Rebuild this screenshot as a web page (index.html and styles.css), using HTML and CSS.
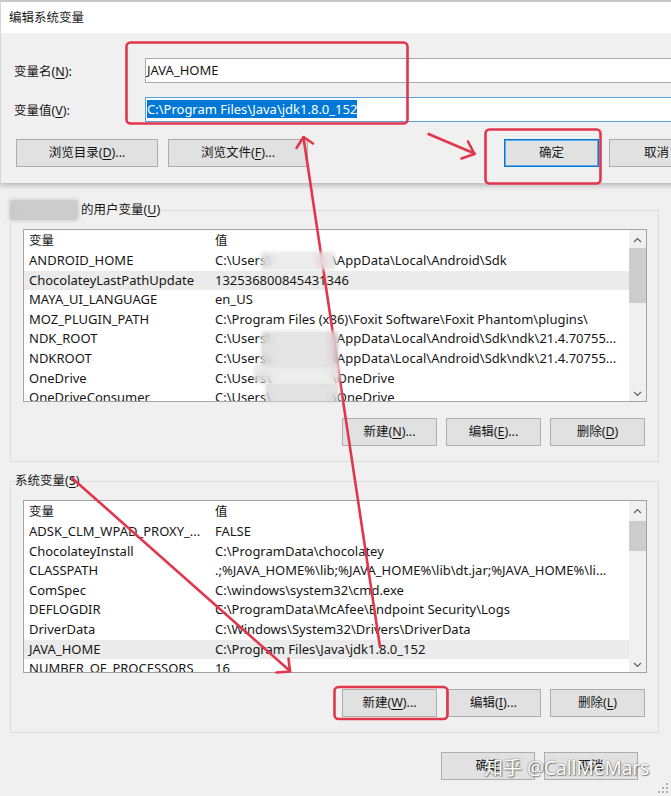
FILE: index.html
```html
<!DOCTYPE html>
<html lang="zh-CN">
<head>
<meta charset="utf-8">
<title>编辑系统变量</title>
<link rel="stylesheet" href="styles.css">
</head>
<body>
<div class="screen">

  <section class="edit-dlg">
    <div class="edit-title">编辑系统变量</div>
    <div class="edit-body">
      <div class="field">
        <span class="field-label">变量名(<u>N</u>):</span>
        <div class="text-input">JAVA_HOME</div>
      </div>
      <div class="field">
        <span class="field-label">变量值(<u>V</u>):</span>
        <div class="text-input focus"><span class="sel">C:\Program Files\Java\jdk1.8.0_152</span></div>
      </div>
      <div class="edit-btns">
        <button class="btn btn-browse-dir">浏览目录(<u>D</u>)...</button>
        <button class="btn btn-browse-file">浏览文件(<u>F</u>)...</button>
        <button class="btn btn-default btn-ok">确定</button>
        <button class="btn btn-cancel">取消</button>
      </div>
    </div>
  </section>

  <div class="env">
    <fieldset class="group">
      <legend class="group-label"><span class="name-slot"></span>的用户变量(<u>U</u>)</legend>
      <div class="lv">
        <div class="lv-main">
          <div class="lv-head"><span>变量</span><span>值</span></div>
          <div class="lv-row"><span>ANDROID_HOME</span><span>C:\Users\<i class="gap"></i>\AppData\Local\Android\Sdk</span></div>
          <div class="lv-row hl"><span>ChocolateyLastPathUpdate</span><span>132536800845431346</span></div>
          <div class="lv-row"><span>MAYA_UI_LANGUAGE</span><span>en_US</span></div>
          <div class="lv-row"><span>MOZ_PLUGIN_PATH</span><span>C:\Program Files (x86)\Foxit Software\Foxit Phantom\plugins\</span></div>
          <div class="lv-row"><span>NDK_ROOT</span><span>C:\Users\<i class="gap"></i>\AppData\Local\Android\Sdk\ndk\21.4.70755...</span></div>
          <div class="lv-row"><span>NDKROOT</span><span>C:\Users\<i class="gap"></i>\AppData\Local\Android\Sdk\ndk\21.4.70755...</span></div>
          <div class="lv-row"><span>OneDrive</span><span>C:\Users\<i class="gap"></i>\OneDrive</span></div>
          <div class="lv-row"><span>OneDriveConsumer</span><span>C:\Users\<i class="gap"></i>\OneDrive</span></div>
        </div>
        <div class="lv-scroll">
          <div class="sb-arrow"><svg width="9" height="6" viewBox="0 0 9 6"><polyline points="1,5 4.5,1.5 8,5" fill="none" stroke="#606060" stroke-width="1.2"/></svg></div>
          <div class="sb-track"><div class="thumb thumb-user"></div></div>
          <div class="sb-arrow"><svg width="9" height="6" viewBox="0 0 9 6"><polyline points="1,1 4.5,4.5 8,1" fill="none" stroke="#606060" stroke-width="1.2"/></svg></div>
        </div>
      </div>
      <div class="grp-btns">
        <button class="btn">新建(<u>N</u>)...</button>
        <button class="btn">编辑(<u>E</u>)...</button>
        <button class="btn">删除(<u>D</u>)</button>
      </div>
    </fieldset>

    <fieldset class="group group-sys">
      <legend class="group-label">系统变量(<u>S</u>)</legend>
      <div class="lv">
        <div class="lv-main">
          <div class="lv-head"><span>变量</span><span>值</span></div>
          <div class="lv-row"><span>ADSK_CLM_WPAD_PROXY_...</span><span>FALSE</span></div>
          <div class="lv-row"><span>ChocolateyInstall</span><span>C:\ProgramData\chocolatey</span></div>
          <div class="lv-row"><span>CLASSPATH</span><span>.;%JAVA_HOME%\lib;%JAVA_HOME%\lib\dt.jar;%JAVA_HOME%\li...</span></div>
          <div class="lv-row"><span>ComSpec</span><span>C:\windows\system32\cmd.exe</span></div>
          <div class="lv-row"><span>DEFLOGDIR</span><span>C:\ProgramData\McAfee\Endpoint Security\Logs</span></div>
          <div class="lv-row"><span>DriverData</span><span>C:\Windows\System32\Drivers\DriverData</span></div>
          <div class="lv-row hl"><span>JAVA_HOME</span><span>C:\Program Files\Java\jdk1.8.0_152</span></div>
          <div class="lv-row"><span>NUMBER_OF_PROCESSORS</span><span>16</span></div>
        </div>
        <div class="lv-scroll">
          <div class="sb-arrow"><svg width="9" height="6" viewBox="0 0 9 6"><polyline points="1,5 4.5,1.5 8,5" fill="none" stroke="#606060" stroke-width="1.2"/></svg></div>
          <div class="sb-track"><div class="thumb thumb-sys"></div></div>
          <div class="sb-arrow"><svg width="9" height="6" viewBox="0 0 9 6"><polyline points="1,1 4.5,4.5 8,1" fill="none" stroke="#606060" stroke-width="1.2"/></svg></div>
        </div>
      </div>
      <div class="grp-btns">
        <button class="btn">新建(<u>W</u>)...</button>
        <button class="btn">编辑(<u>I</u>)...</button>
        <button class="btn">删除(<u>L</u>)</button>
      </div>
    </fieldset>

    <div class="footer">
      <button class="btn">确定</button>
      <button class="btn">取消</button>
    </div>
  </div>

  <svg class="annot" width="671" height="796" viewBox="0 0 671 796">
    <g fill="none" stroke="#e2364c" stroke-width="2.6" stroke-linecap="round" stroke-linejoin="round">
      <rect x="126.5" y="42.5" width="281" height="81" rx="4"/>
      <rect x="485.5" y="129.5" width="115" height="54" rx="4"/>
      <rect x="334.5" y="687" width="113" height="32" rx="4"/>
      <line x1="380" y1="647" x2="303.5" y2="137.5"/>
      <polyline points="296.5,148 303.5,137 313,143.5"/>
      <line x1="72.5" y1="478.5" x2="290" y2="671"/>
      <polyline points="276.5,672.5 290,671.5 288.5,658.5"/>
      <line x1="428.5" y1="134" x2="474.5" y2="153.5"/>
      <polyline points="468,141.5 474.5,154 461.5,158.5"/>
    </g>
  </svg>

  <div class="mosaic mosaic-user"></div>
  <div class="mosaic mosaic-android"></div>
  <div class="mosaic mosaic-ndk"></div>
  <div class="mosaic mosaic-ndk2"></div>
  <div class="mosaic mosaic-od"></div>

  <svg class="grip" width="10" height="10" viewBox="0 0 10 10">
    <g fill="#b0b0b0"><rect x="8" y="0" width="2" height="2"/><rect x="4" y="4" width="2" height="2"/><rect x="8" y="4" width="2" height="2"/><rect x="0" y="8" width="2" height="2"/><rect x="4" y="8" width="2" height="2"/><rect x="8" y="8" width="2" height="2"/></g>
  </svg>

  <div class="watermark">知乎 @CallMeMars</div>
</div>
</body>
</html>
```

FILE: styles.css
```css
* { box-sizing: border-box; }
html, body { margin: 0; padding: 0; }
body {
  width: 671px;
  height: 796px;
  overflow: hidden;
  background: #f0f0f0;
  font-family: "Noto Sans", "Noto Sans CJK SC", sans-serif;
  font-size: 13px;
  color: #161616;
}
.screen {
  position: relative;
  width: 671px;
  height: 796px;
  overflow: hidden;
}
u { text-decoration: underline; text-underline-offset: 2px; text-decoration-thickness: 1px; }

/* ---------- top edit dialog ---------- */
.edit-dlg {
  position: relative;
  z-index: 2;
  width: 730px;
  background: #f0f0f0;
  border-top: 2px solid #c8c8c8;
  border-left: 1px solid #d4d4d4;
  box-shadow: 0 2px 6px rgba(0, 0, 0, 0.28);
}
.edit-title {
  height: 31px;
  background: #ffffff;
  padding-left: 8px;
  font-size: 12.5px;
  line-height: 31px;
  color: #1a1a1a;
}
.edit-body {
  height: 150px;
  padding: 25px 0 0 13px;
}
.field {
  display: flex;
  align-items: center;
  height: 25px;
}
.field + .field { margin-top: 14px; }
.field-label {
  width: 131px;
  flex: none;
  font-size: 12.5px;
}
.text-input {
  flex: 1;
  height: 25px;
  background: #ffffff;
  border: 1px solid #a9a9a9;
  padding: 2px 1px 0;
  line-height: 19px;
  font-size: 13px;
  white-space: nowrap;
}
.text-input.focus { border-color: #5a9fe0; }
.sel { background: #0078d7; color: #ffffff; }

.edit-btns {
  display: flex;
  gap: 10px;
  margin-top: 17px;
  margin-left: 2px;
}
.btn {
  height: 28px;
  padding: 0;
  background: #e1e1e1;
  border: 1px solid #adadad;
  font-family: inherit;
  font-size: 12.5px;
  color: #161616;
  line-height: 26px;
}
.btn-browse-dir { width: 142px; }
.btn-browse-file { width: 140px; }
.btn-ok { width: 95px; margin-left: 186px; }
.btn-cancel { width: 95px; }
.btn-default {
  border-color: #0078d7;
  box-shadow: inset 0 0 0 1px #6aa9e4;
}

/* ---------- environment variables dialog ---------- */
.env { padding-left: 10px; }
.group {
  margin: 18px 0 0 0;
  width: 649px;
  min-width: 0;
  border: 1px solid #dcdcdc;
  padding: 10px 11px 15px 12px;
}
.group-sys { margin-top: 10px; }
.group-label {
  padding: 0;
  margin-left: -8px;
  font-size: 12.5px;
  line-height: 18px;
}
.name-slot {
  display: inline-block;
  width: 66px;
  height: 1px;
}

.lv {
  display: flex;
  height: 173px;
  background: #ffffff;
  border: 1px solid #a3a3a3;
}
.lv-main {
  flex: 1;
  min-width: 0;
  overflow: hidden;
}
.lv-head, .lv-row {
  display: grid;
  grid-template-columns: 186px 1fr;
  white-space: nowrap;
}
.lv-head {
  height: 21px;
  line-height: 21px;
  font-size: 12.5px;
}
.lv-row {
  height: 19.6px;
  line-height: 19.6px;
}
.lv-head > span, .lv-row > span {
  padding-left: 5px;
  overflow: hidden;
}
.lv-row.hl { background: #ebebeb; }
.gap {
  display: inline-block;
  width: 61px;
}

.lv-scroll {
  width: 17px;
  flex: none;
  background: #f0f0f0;
  display: flex;
  flex-direction: column;
}
.sb-arrow {
  height: 17px;
  display: flex;
  align-items: center;
  justify-content: center;
  padding-top: 2px;
}
.sb-track { flex: 1; }
.thumb { background: #cdcdcd; }
.thumb-user { margin-top: 1px; height: 55px; }
.thumb-sys { margin-top: 3px; height: 30px; }

.grp-btns {
  display: flex;
  justify-content: flex-end;
  gap: 9px;
  margin-top: 16px;
  padding-right: 2px;
}
.grp-btns .btn { width: 95px; }

.footer {
  display: flex;
  justify-content: flex-end;
  gap: 9px;
  margin-top: 19px;
  padding-right: 33px;
}
.footer .btn { width: 94px; }

/* ---------- overlays ---------- */
.annot {
  position: absolute;
  left: 0;
  top: 0;
  z-index: 5;
  pointer-events: none;
}
.mosaic {
  position: absolute;
  z-index: 6;
  background: rgba(212, 212, 212, 0.6);
  backdrop-filter: blur(4px);
  border-radius: 3px;
  box-shadow: 0 0 3px 2px rgba(222, 222, 222, 0.55);
}
.mosaic-user { left: 10px; top: 200px; width: 68px; height: 20px; background: rgba(188, 188, 188, 0.7); box-shadow: 0 0 3px 2px rgba(205, 205, 205, 0.6); }
.mosaic-android { left: 262px; top: 253px; width: 72px; height: 16px; background: rgba(220, 220, 220, 0.55); }
.mosaic-ndk { left: 262px; top: 332px; width: 76px; height: 36px; }
.mosaic-ndk2 { left: 255px; top: 366px; width: 84px; height: 16px; background: rgba(226, 226, 226, 0.55); }
.mosaic-od { left: 266px; top: 384px; width: 72px; height: 17px; background: rgba(208, 208, 208, 0.6); }

.grip {
  position: absolute;
  right: 3px;
  bottom: 3px;
  z-index: 4;
}
.watermark {
  position: absolute;
  left: 484px;
  top: 755px;
  z-index: 7;
  font-size: 19px;
  line-height: 26px;
  color: #ffffff;
  white-space: nowrap;
  text-shadow: 0 0 2px rgba(0, 0, 0, 0.55), 1px 1px 1px rgba(0, 0, 0, 0.35);
}
```
